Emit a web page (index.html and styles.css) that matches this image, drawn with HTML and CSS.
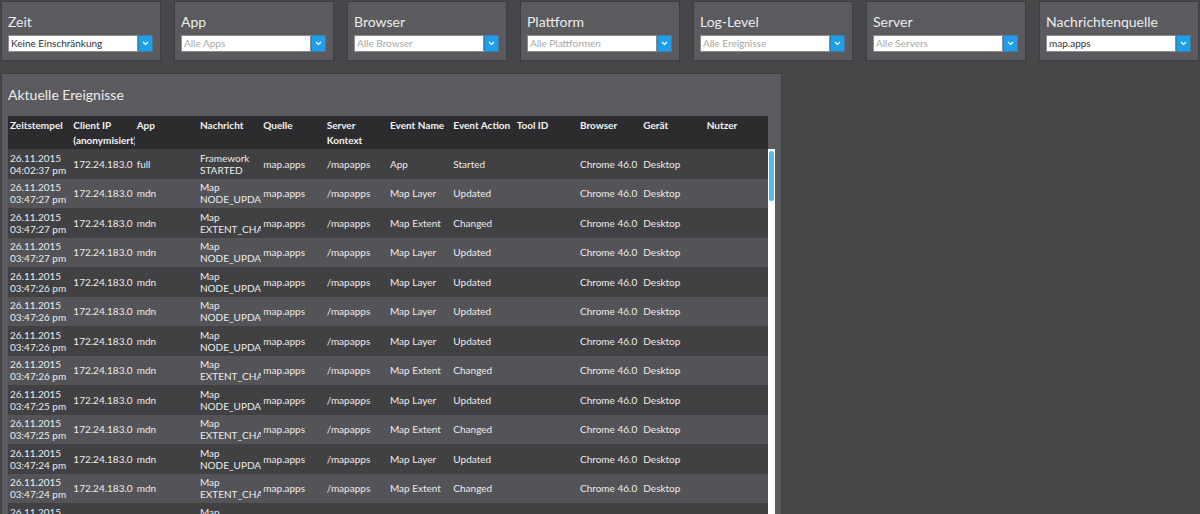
FILE: index.html
```html
<!DOCTYPE html>
<html lang="de">
<head>
<meta charset="utf-8">
<title>Ereignisse</title>
<link rel="stylesheet" href="styles.css">
</head>
<body>
<div class="filters">
  <div class="filter">
    <div class="filter-title">Zeit</div>
    <div class="select"><div class="select-value">Keine Einschränkung</div><div class="select-btn"><svg width="7" height="5" viewBox="0 0 7 5"><polyline points="1,1 3.5,3.5 6,1" fill="none" stroke="#fff" stroke-width="1.2"/></svg></div></div>
  </div>
  <div class="filter">
    <div class="filter-title">App</div>
    <div class="select"><div class="select-value placeholder">Alle Apps</div><div class="select-btn"><svg width="7" height="5" viewBox="0 0 7 5"><polyline points="1,1 3.5,3.5 6,1" fill="none" stroke="#fff" stroke-width="1.2"/></svg></div></div>
  </div>
  <div class="filter">
    <div class="filter-title">Browser</div>
    <div class="select"><div class="select-value placeholder">Alle Browser</div><div class="select-btn"><svg width="7" height="5" viewBox="0 0 7 5"><polyline points="1,1 3.5,3.5 6,1" fill="none" stroke="#fff" stroke-width="1.2"/></svg></div></div>
  </div>
  <div class="filter">
    <div class="filter-title">Plattform</div>
    <div class="select"><div class="select-value placeholder">Alle Plattformen</div><div class="select-btn"><svg width="7" height="5" viewBox="0 0 7 5"><polyline points="1,1 3.5,3.5 6,1" fill="none" stroke="#fff" stroke-width="1.2"/></svg></div></div>
  </div>
  <div class="filter">
    <div class="filter-title">Log-Level</div>
    <div class="select"><div class="select-value placeholder">Alle Ereignisse</div><div class="select-btn"><svg width="7" height="5" viewBox="0 0 7 5"><polyline points="1,1 3.5,3.5 6,1" fill="none" stroke="#fff" stroke-width="1.2"/></svg></div></div>
  </div>
  <div class="filter">
    <div class="filter-title">Server</div>
    <div class="select"><div class="select-value placeholder">Alle Servers</div><div class="select-btn"><svg width="7" height="5" viewBox="0 0 7 5"><polyline points="1,1 3.5,3.5 6,1" fill="none" stroke="#fff" stroke-width="1.2"/></svg></div></div>
  </div>
  <div class="filter">
    <div class="filter-title">Nachrichtenquelle</div>
    <div class="select"><div class="select-value">map.apps</div><div class="select-btn"><svg width="7" height="5" viewBox="0 0 7 5"><polyline points="1,1 3.5,3.5 6,1" fill="none" stroke="#fff" stroke-width="1.2"/></svg></div></div>
  </div>
</div>

<div class="events">
  <div class="events-title">Aktuelle Ereignisse</div>
  <div class="thead">
    <div class="th">Zeitstempel</div>
    <div class="th">Client IP (anonymisiert)</div>
    <div class="th">App</div>
    <div class="th">Nachricht</div>
    <div class="th">Quelle</div>
    <div class="th">Server Kontext</div>
    <div class="th">Event Name</div>
    <div class="th">Event Action</div>
    <div class="th">Tool ID</div>
    <div class="th">Browser</div>
    <div class="th">Gerät</div>
    <div class="th">Nutzer</div>
  </div>
  <div class="body-wrap">
    <div class="tbody">
      <div class="tr"><div class="td">26.11.2015 04:02:37 pm</div><div class="td">172.24.183.0</div><div class="td">full</div><div class="td">Framework STARTED</div><div class="td">map.apps</div><div class="td">/mapapps</div><div class="td">App</div><div class="td">Started</div><div class="td"></div><div class="td">Chrome 46.0</div><div class="td">Desktop</div><div class="td"></div></div>
      <div class="tr"><div class="td">26.11.2015 03:47:27 pm</div><div class="td">172.24.183.0</div><div class="td">mdn</div><div class="td">Map NODE_UPDATED</div><div class="td">map.apps</div><div class="td">/mapapps</div><div class="td">Map Layer</div><div class="td">Updated</div><div class="td"></div><div class="td">Chrome 46.0</div><div class="td">Desktop</div><div class="td"></div></div>
      <div class="tr"><div class="td">26.11.2015 03:47:27 pm</div><div class="td">172.24.183.0</div><div class="td">mdn</div><div class="td">Map EXTENT_CHANGED</div><div class="td">map.apps</div><div class="td">/mapapps</div><div class="td">Map Extent</div><div class="td">Changed</div><div class="td"></div><div class="td">Chrome 46.0</div><div class="td">Desktop</div><div class="td"></div></div>
      <div class="tr"><div class="td">26.11.2015 03:47:27 pm</div><div class="td">172.24.183.0</div><div class="td">mdn</div><div class="td">Map NODE_UPDATED</div><div class="td">map.apps</div><div class="td">/mapapps</div><div class="td">Map Layer</div><div class="td">Updated</div><div class="td"></div><div class="td">Chrome 46.0</div><div class="td">Desktop</div><div class="td"></div></div>
      <div class="tr"><div class="td">26.11.2015 03:47:26 pm</div><div class="td">172.24.183.0</div><div class="td">mdn</div><div class="td">Map NODE_UPDATED</div><div class="td">map.apps</div><div class="td">/mapapps</div><div class="td">Map Layer</div><div class="td">Updated</div><div class="td"></div><div class="td">Chrome 46.0</div><div class="td">Desktop</div><div class="td"></div></div>
      <div class="tr"><div class="td">26.11.2015 03:47:26 pm</div><div class="td">172.24.183.0</div><div class="td">mdn</div><div class="td">Map NODE_UPDATED</div><div class="td">map.apps</div><div class="td">/mapapps</div><div class="td">Map Layer</div><div class="td">Updated</div><div class="td"></div><div class="td">Chrome 46.0</div><div class="td">Desktop</div><div class="td"></div></div>
      <div class="tr"><div class="td">26.11.2015 03:47:26 pm</div><div class="td">172.24.183.0</div><div class="td">mdn</div><div class="td">Map NODE_UPDATED</div><div class="td">map.apps</div><div class="td">/mapapps</div><div class="td">Map Layer</div><div class="td">Updated</div><div class="td"></div><div class="td">Chrome 46.0</div><div class="td">Desktop</div><div class="td"></div></div>
      <div class="tr"><div class="td">26.11.2015 03:47:26 pm</div><div class="td">172.24.183.0</div><div class="td">mdn</div><div class="td">Map EXTENT_CHANGED</div><div class="td">map.apps</div><div class="td">/mapapps</div><div class="td">Map Extent</div><div class="td">Changed</div><div class="td"></div><div class="td">Chrome 46.0</div><div class="td">Desktop</div><div class="td"></div></div>
      <div class="tr"><div class="td">26.11.2015 03:47:25 pm</div><div class="td">172.24.183.0</div><div class="td">mdn</div><div class="td">Map NODE_UPDATED</div><div class="td">map.apps</div><div class="td">/mapapps</div><div class="td">Map Layer</div><div class="td">Updated</div><div class="td"></div><div class="td">Chrome 46.0</div><div class="td">Desktop</div><div class="td"></div></div>
      <div class="tr"><div class="td">26.11.2015 03:47:25 pm</div><div class="td">172.24.183.0</div><div class="td">mdn</div><div class="td">Map EXTENT_CHANGED</div><div class="td">map.apps</div><div class="td">/mapapps</div><div class="td">Map Extent</div><div class="td">Changed</div><div class="td"></div><div class="td">Chrome 46.0</div><div class="td">Desktop</div><div class="td"></div></div>
      <div class="tr"><div class="td">26.11.2015 03:47:24 pm</div><div class="td">172.24.183.0</div><div class="td">mdn</div><div class="td">Map NODE_UPDATED</div><div class="td">map.apps</div><div class="td">/mapapps</div><div class="td">Map Layer</div><div class="td">Updated</div><div class="td"></div><div class="td">Chrome 46.0</div><div class="td">Desktop</div><div class="td"></div></div>
      <div class="tr"><div class="td">26.11.2015 03:47:24 pm</div><div class="td">172.24.183.0</div><div class="td">mdn</div><div class="td">Map EXTENT_CHANGED</div><div class="td">map.apps</div><div class="td">/mapapps</div><div class="td">Map Extent</div><div class="td">Changed</div><div class="td"></div><div class="td">Chrome 46.0</div><div class="td">Desktop</div><div class="td"></div></div>
      <div class="tr"><div class="td">26.11.2015 03:47:23 pm</div><div class="td">172.24.183.0</div><div class="td">mdn</div><div class="td">Map NODE_UPDATED</div><div class="td">map.apps</div><div class="td">/mapapps</div><div class="td">Map Layer</div><div class="td">Updated</div><div class="td"></div><div class="td">Chrome 46.0</div><div class="td">Desktop</div><div class="td"></div></div>
      <div class="tr"><div class="td">26.11.2015 03:47:23 pm</div><div class="td">172.24.183.0</div><div class="td">mdn</div><div class="td">Map EXTENT_CHANGED</div><div class="td">map.apps</div><div class="td">/mapapps</div><div class="td">Map Extent</div><div class="td">Changed</div><div class="td"></div><div class="td">Chrome 46.0</div><div class="td">Desktop</div><div class="td"></div></div>
    </div>
    <div class="scrollbar"><div class="thumb"></div></div>
  </div>
</div>
</body>
</html>
```

FILE: styles.css
```css
* { box-sizing: border-box; }

html, body {
  margin: 0;
  padding: 0;
  height: 100%;
}

body {
  background: #474649;
  font-family: Lato, "Open Sans", sans-serif;
  color: #ececec;
  overflow: hidden;
}

.filters {
  display: flex;
  justify-content: space-between;
  padding: 1px 1px 0 1px;
}

.filter {
  width: 160px;
  height: 60px;
  background: #5b5a5f;
  border: 1px solid #3e3d41;
  padding: 10px 7px 0 6px;
}

.filter-title {
  font-size: 14px;
  line-height: 20px;
  color: #ececec;
}

.select {
  display: flex;
  height: 17px;
  margin-top: 3px;
}

.select-value {
  flex: 1;
  background: #fff;
  border: 1px solid #8c8c8c;
  font-size: 10px;
  line-height: 15px;
  padding-left: 2px;
  color: #333;
  white-space: nowrap;
  overflow: hidden;
}

.select-value.placeholder {
  color: #a8a8a8;
}

.select-btn {
  width: 15px;
  background: #1f9fe9;
  border: 1px solid #3b7fa8;
  display: flex;
  align-items: center;
  justify-content: center;
}

.events {
  margin: 12px 0 0 1px;
  width: 781px;
  height: 480px;
  background: #5b5a5f;
  border: 1px solid #3e3d41;
  padding: 12px 5px 0 6px;
}

.events-title {
  font-size: 14px;
  line-height: 18px;
  color: #ececec;
  margin-bottom: 12px;
}

.thead {
  width: 760px;
  height: 33px;
  background: #2c2c2e;
  display: grid;
  grid-template-columns: repeat(12, 1fr);
  padding-top: 2px;
}

.th {
  font-size: 10px;
  font-weight: bold;
  line-height: 15px;
  padding-left: 2px;
  overflow: hidden;
  color: #f2f2f2;
}

.body-wrap {
  display: flex;
  align-items: flex-start;
}

.tbody {
  width: 760px;
}

.tr {
  display: grid;
  grid-template-columns: repeat(12, 1fr);
  height: 29.5px;
  background: #545357;
}

.tr:nth-child(odd) {
  background: #414043;
}

.td {
  font-size: 10px;
  line-height: 12px;
  padding-left: 2px;
  overflow: hidden;
  display: flex;
  align-items: center;
  color: #ececec;
}

.scrollbar {
  width: 7px;
  height: 420px;
  background: #fff;
  padding: 2px 1px 0 1px;
}

.thumb {
  height: 50px;
  background: #5bb9f0;
  border-radius: 3px;
}
```
